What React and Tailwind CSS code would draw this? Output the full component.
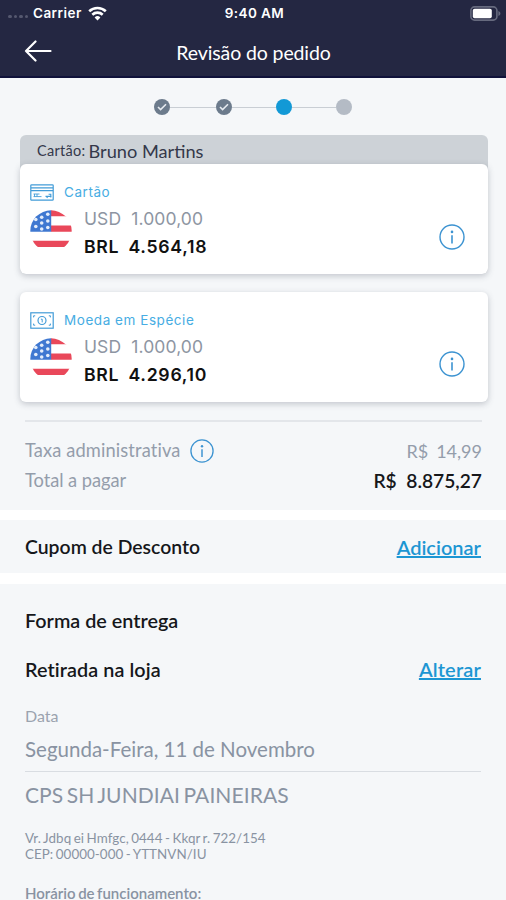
import React from 'react';
import clsx from 'clsx';

const steps = ['done', 'done', 'current', 'pending'];

const ArrowLeft = () => (
  <svg width="28" height="22" viewBox="0 0 28 22" fill="none" stroke="#fff" strokeWidth="2.2" strokeLinecap="round" strokeLinejoin="round">
    <path d="M11.5 1.5 2 11l9.5 9.5M2 11h24.5" />
  </svg>
);

const WifiIcon = () => (
  <svg width="19" height="15" viewBox="0 0 19 15" fill="none" stroke="#fff" strokeWidth="2.6">
    <path d="M1.2 5.3a12 12 0 0 1 16.6 0" />
    <path d="M4.3 8.7a7.6 7.6 0 0 1 10.4 0" />
    <path d="M9.5 14.4 6.6 11.5a4.1 4.1 0 0 1 5.8 0Z" fill="#fff" stroke="none" />
  </svg>
);

const BatteryIcon = () => (
  <svg width="31" height="15" viewBox="0 0 31 15">
    <rect x="0.9" y="0.9" width="26" height="13.2" rx="3.6" fill="none" stroke="#666a7e" strokeWidth="1.6" />
    <rect x="2.8" y="2.7" width="19" height="9.6" rx="1.8" fill="#fff" />
    <path d="M28.4 5v5c1.2-.4 2-1.3 2-2.5s-.8-2.1-2-2.5Z" fill="#666a7e" />
  </svg>
);

const InfoIcon = ({ size = 26 }) => (
  <svg width={size} height={size} viewBox="0 0 26 26" fill="none" stroke="#3c93d1" strokeWidth="1.4">
    <circle cx="13" cy="13" r="12" />
    <path d="M13 11.2v8.3" strokeWidth="1.6" />
    <circle cx="13" cy="7.9" r="1.3" fill="#3c93d1" stroke="none" />
  </svg>
);

const CardIcon = () => (
  <svg width="24" height="17" viewBox="0 0 24 17" fill="none" stroke="#429cd8" strokeWidth="1.2">
    <rect x="0.8" y="0.8" width="22.4" height="15.4" rx="0.8" />
    <path d="M1 3.9h22M1 6.6h22" />
    <path d="M3.5 10h6M3.5 12.6h8M4.5 10v2.6M7 10v2.6" strokeWidth="0.9" />
    <path d="M15.5 12.4h6M18.6 10.2h2.2v3.4M16 12.2l1.6 1.6" strokeWidth="1.1" />
  </svg>
);

const CashIcon = () => (
  <svg width="24" height="17" viewBox="0 0 24 17" fill="none" stroke="#429cd8" strokeWidth="1.2">
    <rect x="0.8" y="0.8" width="22.4" height="15.4" />
    <circle cx="12" cy="8.5" r="4" />
    <path d="M10.9 7.2h1.3v3.2" strokeWidth="1" />
    <path d="M3.6 5.4V3.8h1.6M18.8 3.8h1.6v1.6M3.6 11.6v1.6h1.6M18.8 13.2h1.6v-1.6" strokeWidth="1" />
  </svg>
);

const stars = [
  [17.8, 4.3], [11.7, 7.2], [17.8, 11], [5.8, 9.5], [11.7, 13],
  [5.8, 16.5], [17.8, 17.5], [11.7, 19],
];

const UsaFlag = ({ id }) => (
  <svg width="42" height="42" viewBox="0 0 42 42">
    <clipPath id={id}>
      <circle cx="21" cy="21" r="20.7" />
    </clipPath>
    <g clipPath={`url(#${id})`}>
      <rect width="42" height="42" fill="#fff" />
      <path d="M21 0h21v6.3H21zM21 15.5h21v6.3H21zM0 30.7h42V37H0z" fill="#e9485a" />
      <path d="M0 0h21.2v21.8H0z" fill="#3f78d1" />
      {stars.map(([x, y]) => (
        <circle key={`${x}-${y}`} cx={x} cy={y} r="1.8" fill="#e4edfa" />
      ))}
    </g>
  </svg>
);

const StepDot = ({ status }) => (
  <span
    className={clsx(
      'flex h-4 w-4 items-center justify-center rounded-full',
      status === 'done' && 'bg-[#6c7b8c]',
      status === 'current' && 'bg-[#1299d6]',
      status === 'pending' && 'bg-[#b4bbc5]'
    )}
  >
    {status === 'done' && (
      <svg width="10" height="8" viewBox="0 0 10 8" fill="none" stroke="#e6ebf0" strokeWidth="1.6">
        <path d="m1 4 2.6 2.6L9 1.2" />
      </svg>
    )}
  </span>
);

const CurrencyCard = ({ id, icon, label, foreign, total }) => (
  <div className="flex h-[110px] items-start rounded-md bg-white pl-[10px] pr-[23px] pt-[20px] font-['Inter',sans-serif] shadow-[0_2px_6px_rgba(60,70,85,0.28)]">
    <div className="flex-1">
      <div className="flex h-[17px] items-center gap-[10px]">
        {icon}
        <span className="pt-px text-[13.5px] leading-none tracking-[0.55px] text-[#47ade3]">{label}</span>
      </div>
      <div className="mt-[9px] flex items-start gap-3">
        <UsaFlag id={id} />
        <div className="whitespace-pre text-[17.5px]">
          <p className="-mt-px h-[20px] leading-[20px] tracking-[0.1px] text-[#8d95a2]">USD  {foreign}</p>
          <p className="mt-[8px] h-[20px] text-[17.7px] font-semibold leading-[20px] tracking-[0.7px] text-[#111] [word-spacing:-0.6px]">BRL  {total}</p>
        </div>
      </div>
    </div>
    <div className="mt-[39.5px]">
      <InfoIcon />
    </div>
  </div>
);

const App = () => {
  return (
    <div className="h-[900px] w-[506px] overflow-hidden bg-white font-['Lato',sans-serif]">
      <header className="h-[78px] border-b-2 border-[#10123a] bg-[#242742] text-white">
        <div className="grid h-[26px] grid-cols-3 items-center pl-2 pr-[5px] font-['Inter',sans-serif] text-[13.5px] font-semibold">
          <div className="flex items-center">
            <div className="mt-[7px] flex gap-[2px]">
              {[0, 1, 2, 3].map((dot) => (
                <span key={dot} className="h-[3.5px] w-[3.5px] rounded-full bg-[#55586f]" />
              ))}
            </div>
            <span className="ml-[5px] mr-[6px] tracking-[0.45px]">Carrier</span>
            <WifiIcon />
          </div>
          <span className="text-center tracking-[0.4px]">9:40 AM</span>
          <div className="flex justify-end">
            <BatteryIcon />
          </div>
        </div>
        <div className="grid h-[50px] grid-cols-[1fr_auto_1fr] items-center px-6">
          <ArrowLeft />
          <h1 className="pl-px pt-[3px] text-[19.5px] leading-none tracking-[-0.12px]">Revisão do pedido</h1>
        </div>
      </header>

      <section className="h-[432px] bg-[#f5f7f9] pl-5 pr-[18px] pt-[21px]">
        <div className="ml-[134px] flex h-4 items-center">
          {steps.map((status, index) => (
            <React.Fragment key={index}>
              {index > 0 && <span className={clsx('h-px bg-[#c9ced4]', index === 1 ? 'w-[46px]' : 'w-[44px]')} />}
              <StepDot status={status} />
            </React.Fragment>
          ))}
        </div>

        <div className="mt-5 rounded-md bg-[#cdd2d7]">
          <div className="flex h-[29px] items-center gap-[3px] pl-[17px] pt-[3px] leading-none text-[#34384a]">
            <span className="text-[14.5px] tracking-[0.3px]">Cartão:</span>
            <span className="text-[18.2px]">Bruno Martins</span>
          </div>
          <CurrencyCard id="flag-card" icon={<CardIcon />} label="Cartão" foreign="1.000,00" total="4.564,18" />
        </div>
        <div className="mt-[17.5px]">
          <CurrencyCard id="flag-cash" icon={<CashIcon />} label="Moeda em Espécie" foreign="1.000,00" total="4.296,10" />
        </div>

        <div className="ml-[5px] mr-[6px] mt-[18px] border-t-2 border-[#e3e6ea] pt-[14.5px] text-[18.3px] [font-variant-ligatures:none]">
          <div className="flex h-[30px] items-center justify-between text-[#949dab]">
            <span className="flex items-center gap-[9px] tracking-[0.12px]">
              Taxa administrativa
              <InfoIcon size={24} />
            </span>
            <span className="whitespace-pre text-[18px] [word-spacing:-0.6px]">R$  14,99</span>
          </div>
          <div className="flex h-[30px] items-center justify-between text-[#949dab]">
            <span className="tracking-[-0.05px]">Total a pagar</span>
            <span className="whitespace-pre text-[19.2px] font-semibold text-[#16171b]">R$  8.875,27</span>
          </div>
        </div>
      </section>

      <section className="mt-[10px] flex h-[53px] items-center justify-between bg-[#f5f7f9] px-[25px] pt-px font-semibold text-[#16171b]">
        <h2 className="text-[19.4px]">Cupom de Desconto</h2>
        <a href="#" className="text-[20px] text-[#1d96d3] underline">Adicionar</a>
      </section>

      <section className="mt-[11px] h-[316px] bg-[#f5f7f9] px-[25px] pt-[21px] text-[#8993a2] [font-variant-ligatures:none]">
        <h2 className="h-[30px] text-[19.8px] font-semibold leading-[30px] text-[#16171b]">Forma de entrega</h2>
        <div className="mt-[19px] flex h-[30px] items-center justify-between text-[19.8px] font-semibold text-[#16171b]">
          <h3 className="pt-px tracking-[0.08px]">Retirada na loja</h3>
          <a href="#" className="text-[20px] tracking-[0.15px] text-[#1d96d3] underline">Alterar</a>
        </div>
        <p className="mt-[22px] h-[20px] text-[16px] leading-[20px] text-[#9ba3af]">Data</p>
        <p className="mt-[8px] h-[30px] text-[20.5px] leading-[30px]">Segunda-Feira, 11 de Novembro</p>
        <div className="mt-[7px] border-t border-[#d9dde2] pt-[8px]">
          <p className="h-[30px] text-[21px] leading-[30px] tracking-[0.08px] [word-spacing:-2px]">CPS SH JUNDIAI PAINEIRAS</p>
          <p className="mt-[20px] text-[13.4px] leading-[16px] tracking-[0.05px] [word-spacing:-1px]">
            Vr. Jdbq ei Hmfgc, 0444 - Kkqr r. 722/154
            <br />
            CEP: 00000-000 - YTTNVN/IU
          </p>
          <p className="mt-[24px] text-[15px] font-semibold leading-[14px] [word-spacing:-1.2px]">Horário de funcionamento:</p>
        </div>
      </section>
    </div>
  );
};

export default App;
